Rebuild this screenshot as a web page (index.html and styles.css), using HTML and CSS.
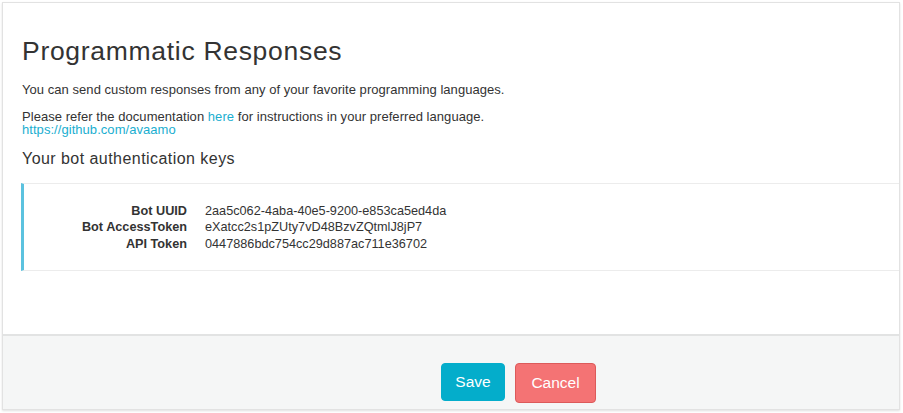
FILE: index.html
```html
<!DOCTYPE html>
<html>
<head>
<meta charset="utf-8">
<link rel="stylesheet" href="styles.css">
</head>
<body>
<div class="card">
  <div class="main">
    <h1 class="title">Programmatic Responses</h1>
    <p class="text first">You can send custom responses from any of your favorite programming languages.</p>
    <p class="text">Please refer the documentation <a class="link" href="#">here</a> for instructions in your preferred language.<br><a class="link" href="#">https://github.com/avaamo</a></p>
    <h2 class="subtitle">Your bot authentication keys</h2>
    <div class="keys">
      <div class="row"><span class="label">Bot UUID</span><span class="value">2aa5c062-4aba-40e5-9200-e853ca5ed4da</span></div>
      <div class="row"><span class="label">Bot AccessToken</span><span class="value">eXatcc2s1pZUty7vD48BzvZQtmlJ8jP7</span></div>
      <div class="row"><span class="label">API Token</span><span class="value">0447886bdc754cc29d887ac711e36702</span></div>
    </div>
  </div>
  <div class="footer">
    <button class="btn save">Save</button>
    <button class="btn cancel">Cancel</button>
  </div>
</div>
</body>
</html>
```

FILE: styles.css
```css
html, body {
  margin: 0;
  padding: 0;
  background: #ffffff;
}
body {
  padding: 2px 3px 3px 2px;
  font-family: "Liberation Sans", Arial, Helvetica, sans-serif;
  color: #333333;
}
.card {
  height: 406px;
  border: 1px solid #e2e2e2;
  box-shadow: 0 1px 2px rgba(0,0,0,0.12);
  background: #ffffff;
  display: flex;
  flex-direction: column;
}
.main {
  height: 331px;
  padding-left: 18px;
  box-sizing: border-box;
  padding-top: 33px;
}
.title {
  margin: 0 0 0 1px;
  font-size: 26.5px;
  font-weight: normal;
  line-height: 30px;
  letter-spacing: 0.7px;
  color: #333333;
}
.text {
  margin: 0 0 0 1px;
  font-size: 13px;
  line-height: 13.5px;
  letter-spacing: 0.05px;
  color: #333333;
}
.text.first {
  margin-top: 17px;
  margin-bottom: 13px;
}
.link {
  color: #1aaed0;
  text-decoration: none;
}
.subtitle {
  margin: 12px 0 0 1px;
  font-size: 16px;
  font-weight: normal;
  line-height: 19px;
  letter-spacing: 0.45px;
  color: #333333;
}
.keys {
  margin-top: 15px;
  border-top: 1px solid #ececec;
  border-bottom: 1px solid #ececec;
  border-left: 3px solid #5bc2df;
  padding: 19px 0 18px 0;
  font-size: 12.7px;
  line-height: 16.5px;
}
.row {
  display: flex;
  gap: 18px;
}
.label {
  width: 163px;
  text-align: right;
  font-weight: bold;
  flex: none;
}
.value {
  color: #333333;
}
.footer {
  flex: 1;
  border-top: 2px solid #e2e3e3;
  background: #f5f6f6;
  display: flex;
  align-items: flex-start;
  gap: 10px;
  padding: 27px 0 0 438px;
}
.btn {
  font-family: "Liberation Sans", Arial, Helvetica, sans-serif;
  font-size: 15.5px;
  color: #ffffff;
  border-radius: 4px;
  cursor: pointer;
}
.save {
  width: 64px;
  height: 38px;
  background: #04adcb;
  border: 1px solid #04adcb;
}
.cancel {
  width: 81px;
  height: 40px;
  background: #f47374;
  border: 1px solid #dc5a5a;
}
```
